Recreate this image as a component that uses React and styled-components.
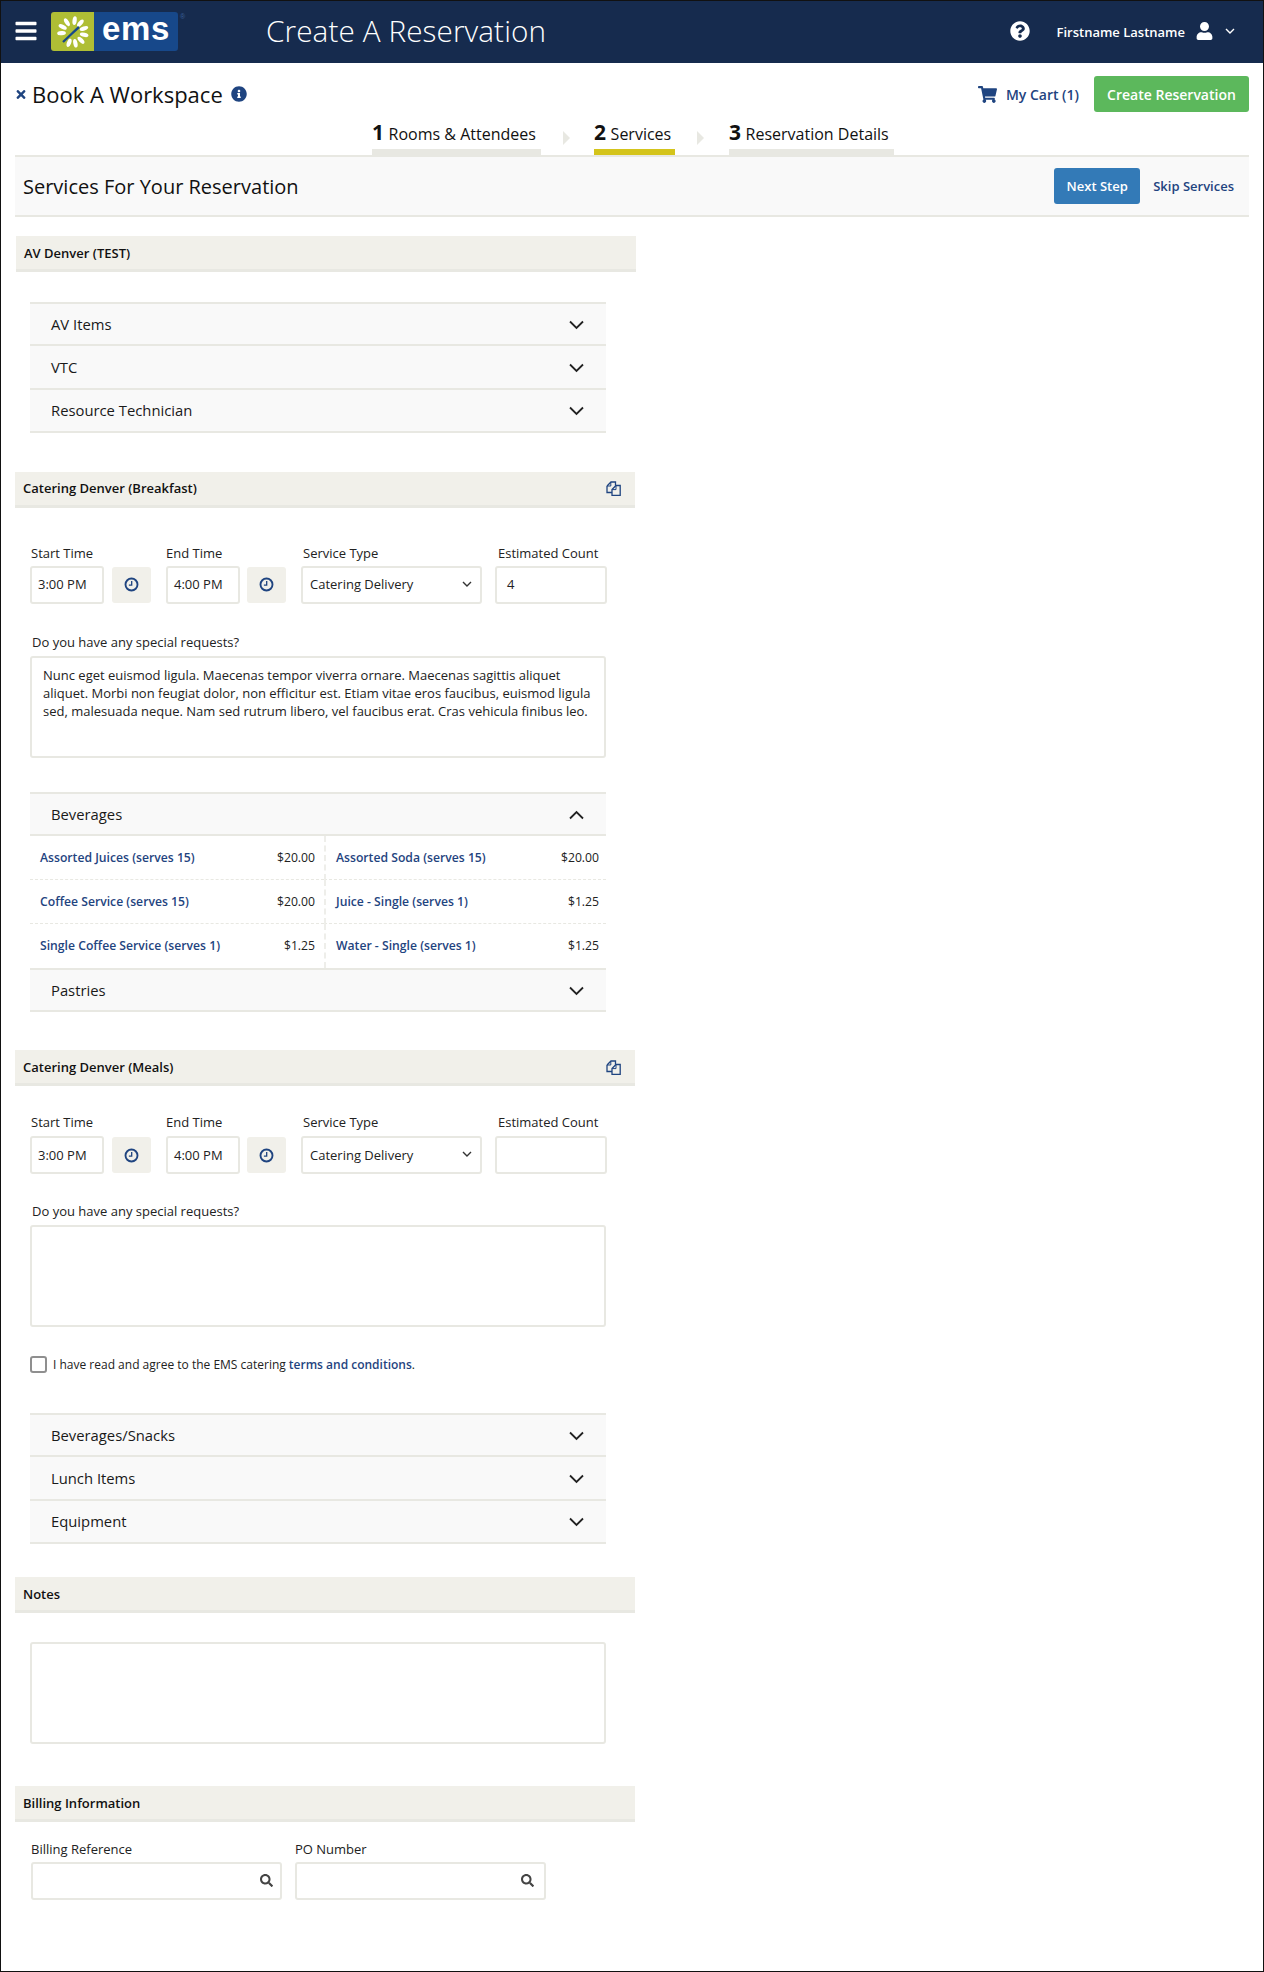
import styled, { createGlobalStyle } from "styled-components";
import {
  FaBars,
  FaTimes,
  FaInfoCircle,
  FaShoppingCart,
  FaQuestionCircle,
  FaUser,
  FaSearch,
} from "react-icons/fa";

const navy = "#1f4480";

const GlobalStyle = createGlobalStyle`
  html, body {
    margin: 0;
    padding: 0;
    background: #fff;
  }
  body {
    font-family: "Open Sans", "Liberation Sans", sans-serif;
    color: #1a1a1a;
  }
  * { box-sizing: border-box; }
`;

const Page = styled.div`
  width: 1264px;
  height: 1972px;
  border: 1px solid #111;
  overflow: hidden;
`;

const Header = styled.header`
  display: flex;
  align-items: center;
  height: 62px;
  background: #162b4e;
  color: #fff;
  padding: 0 28px 2px 14px;
`;

const Burger = styled(FaBars)`
  width: 22px;
  height: 24px;
  margin-right: 14px;
`;

const LogoWrap = styled.div`
  position: relative;
  margin-right: 88px;
  margin-top: 1px;
`;

const Registered = styled.span`
  position: absolute;
  top: 0;
  left: 129px;
  font: 7px/9px "Liberation Sans", sans-serif;
  color: #3a5f96;
`;

const Logo = styled.div`
  display: flex;
  width: 127px;
  height: 39px;
`;

const LogoMark = styled.div`
  display: flex;
  align-items: center;
  justify-content: center;
  width: 43px;
  border-radius: 3px 0 0 3px;
  background: #afbe35;
`;

const LogoWord = styled.div`
  flex: 1;
  border-radius: 0 3px 3px 0;
  background: #17488a;
  color: #fff;
  padding-bottom: 5px;
  font: bold 33px/34px "Liberation Sans", sans-serif;
  letter-spacing: 0.6px;
  text-align: center;
`;

const PageTitle = styled.div`
  flex: 1;
  margin-bottom: 1px;
  font-size: 29.7px;
  font-weight: 300;
  letter-spacing: 0.1px;
`;

const HelpIcon = styled(FaQuestionCircle)`
  width: 20px;
  height: 20px;
  margin-right: 27px;
`;

const UserName = styled.span`
  margin: 1px 11px 0 0;
  font-size: 13px;
  font-weight: 600;
`;

const UserIcon = styled(FaUser)`
  width: 17px;
  height: 18px;
  margin-right: 12px;
`;

const TinyChevron = styled.svg`
  width: 10px;
  height: 7px;
  fill: none;
  stroke: ${(p) => p.$color || "#fff"};
  stroke-width: 1.4;
`;

const Content = styled.main`
  padding: 0 14px 0 14px;
`;

const TitleRow = styled.div`
  display: flex;
  align-items: center;
  height: 56px;
  padding-top: 6px;
`;

const CloseIcon = styled(FaTimes)`
  width: 12px;
  height: 13px;
  color: ${navy};
  margin-right: 5px;
`;

const BookTitle = styled.h1`
  margin: 0 8px 0 0;
  font-size: 22px;
  font-weight: 400;
  line-height: 30px;
  color: #111;
`;

const InfoIcon = styled(FaInfoCircle)`
  width: 16px;
  height: 16px;
  color: ${navy};
`;

const Spacer = styled.div`
  flex: 1;
`;

const CartLink = styled.a`
  display: flex;
  align-items: center;
  color: ${navy};
  font-size: 14px;
  font-weight: 600;
  margin-right: 15px;
`;

const CartIcon = styled(FaShoppingCart)`
  width: 19px;
  height: 17px;
  margin-right: 9px;
`;

const GreenButton = styled.button`
  width: 155px;
  height: 36px;
  border: 0;
  border-radius: 3px;
  background: #5cb85c;
  color: #fff;
  font: 600 14px "Open Sans", sans-serif;
`;

const Steps = styled.nav`
  display: flex;
  height: 38px;
  padding-left: 357px;
  border-bottom: 2px solid #e8e8e2;
`;

const Step = styled.div`
  width: ${(p) => p.$w}px;
  height: 36px;
  border-bottom: 6px solid ${(p) => (p.$active ? "#d4c41b" : "#e8e8e2")};
  font-size: 16px;
  line-height: 26px;
  color: #111;
  white-space: nowrap;
  b {
    font-size: 21px;
    font-weight: 700;
    margin-right: 4.6px;
  }
`;

const StepArrow = styled.div`
  width: 0;
  height: 0;
  margin: 12px ${(p) => p.$right}px 0 ${(p) => p.$left}px;
  border-left: 7px solid #e8e8e2;
  border-top: 7px solid transparent;
  border-bottom: 7px solid transparent;
`;

const ServicesBar = styled.div`
  display: flex;
  align-items: center;
  height: 60px;
  padding: 0 15px 0 8px;
  background: #f9f9f9;
  border-bottom: 2px solid #e8e8e2;
`;

const ServicesTitle = styled.h2`
  flex: 1;
  margin: 0;
  font-size: 20px;
  font-weight: 400;
  color: #111;
`;

const BlueButton = styled.button`
  width: 86px;
  height: 36px;
  border: 0;
  border-radius: 3px;
  background: #337ab7;
  color: #fff;
  font: 600 13px "Open Sans", sans-serif;
  margin-right: 13px;
`;

const SkipLink = styled.a`
  color: ${navy};
  font-size: 13px;
  font-weight: 600;
`;

const Column = styled.div`
  width: 621px;
`;

const SectionHead = styled.div`
  display: flex;
  align-items: center;
  justify-content: space-between;
  width: 620px;
  height: 36px;
  margin-top: ${(p) => p.$top}px;
  margin-left: ${(p) => p.$left || 0}px;
  padding: 0 14px 0 8px;
  background: #f1f0ea;
  border-bottom: 3px solid #e8e8e2;
  font-size: 13px;
  font-weight: 600;
  color: #111;
`;

const CopyIcon = styled.svg`
  width: 15px;
  height: 16px;
  fill: none;
  stroke: ${navy};
  stroke-width: 1.3;
`;

const Indented = styled.div`
  margin: ${(p) => p.$top}px 30px 0 15px;
`;

const AccordionRow = styled.div`
  display: flex;
  align-items: center;
  justify-content: space-between;
  height: ${(p) => p.$h || 43.3}px;
  padding: 0 22px 0 21px;
  background: #f9f9f9;
  border-bottom: 2px solid #e8e8e2;
  border-top: ${(p) => (p.$topLine ? "2px solid #e8e8e2" : "0")};
  font-size: 14.8px;
  color: #1a1a1a;
  &:first-child {
    border-top: 2px solid #e8e8e2;
    height: 44.3px;
  }
`;

const Chevron = styled.svg`
  width: 15px;
  height: 10px;
  fill: none;
  stroke: #222;
  stroke-width: 1.8;
  margin-top: 2px;
`;

const FieldRow = styled.div`
  display: flex;
  align-items: flex-end;
  margin-top: ${(p) => p.$top}px;
  margin-left: ${(p) => p.$left || 15}px;
`;

const Field = styled.div`
  width: ${(p) => p.$w}px;
  margin-right: ${(p) => p.$gap || 0}px;
`;

const Label = styled.div`
  font-size: 13px;
  line-height: 17px;
  margin-bottom: ${(p) => p.$below || 5}px;
  padding-left: ${(p) => p.$pad || 0}px;
  color: #222;
  white-space: nowrap;
`;

const InputBox = styled.div`
  display: flex;
  align-items: center;
  justify-content: space-between;
  height: 38px;
  padding: 0 ${(p) => p.$right || 7}px 1px ${(p) => p.$left || 6}px;
  border: 2px solid #e8e8e2;
  border-radius: 3px;
  background: #fff;
  font-size: 13px;
  color: #222;
`;

const ClockButton = styled.div`
  display: flex;
  align-items: center;
  justify-content: center;
  width: 39px;
  height: 36px;
  margin: 0 15px 1px ${(p) => p.$left}px;
  border-radius: 3px;
  background: #f1f0ea;
`;

const ClockIcon = styled.svg`
  width: 15px;
  height: 15px;
  fill: none;
  stroke: ${navy};
`;

const Request = styled.div`
  height: 102px;
  padding: 8px 11px;
  border: 2px solid #e8e8e2;
  border-radius: 3px;
  background: #fff;
  font-size: 13px;
  line-height: 18px;
  color: #222;
`;

const ItemGrid = styled.div`
  display: grid;
  grid-template-columns: 294px 1fr;
`;

const Item = styled.div`
  display: flex;
  align-items: center;
  justify-content: space-between;
  height: 44px;
  padding: 0 ${(p) => (p.$right ? 7 : 9)}px 1px 10px;
  font-size: 12.2px;
  color: #222;
  border-bottom: ${(p) => (p.$last ? "0" : "1px dashed #e8e8e2")};
  border-left: ${(p) => (p.$right ? "2px dashed #eeeeea" : "0")};
  a {
    color: ${navy};
    font-weight: 600;
  }
`;

const AgreeRow = styled.label`
  display: flex;
  align-items: center;
  margin: 28px 0 0 15px;
  height: 18px;
  font-size: 12px;
  color: #222;
  a {
    color: ${navy};
    font-weight: 600;
    margin-left: 3px;
  }
`;

const CheckBox = styled.span`
  width: 17px;
  height: 17px;
  margin-right: 6px;
  border: 2px solid #8f8f8f;
  border-radius: 3px;
  background: #fff;
`;

const SearchIcon = styled(FaSearch)`
  width: 13px;
  height: 13px;
  color: #444;
`;

const clock = (
  <ClockIcon viewBox="0 0 16 16">
    <circle cx="8" cy="8" r="6.4" strokeWidth="2" />
    <path d="M8.2 4.2V8.6H5.2" strokeWidth="1.4" />
  </ClockIcon>
);

const copy = (
  <CopyIcon viewBox="0 0 15 16">
    <path d="M1 6L5 2h4.5V5.5" />
    <path d="M1 6v6.5h5" />
    <path d="M4.8 2.2V6H1.2" strokeWidth="1" />
    <path d="M10 5.5h4.2v9.8H6V9.5z" />
    <path d="M10 5.8V9.6H6.2" strokeWidth="1" />
  </CopyIcon>
);

const down = (
  <Chevron viewBox="0 0 15 10">
    <path d="M1 1.5l6.5 6.5L14 1.5" />
  </Chevron>
);

const up = (
  <Chevron viewBox="0 0 15 10">
    <path d="M1 8.5L7.5 2 14 8.5" />
  </Chevron>
);

// the gap at the lower left is where the needle of the mark comes out
const rays = [0, 32, 64, 96, 128, 160, 192, 256, 288, 320];

function TimeFields({ count, top, below }) {
  return (
    <FieldRow $top={top}>
      <Field $w={74}>
        <Label $below={below} $pad={1}>
          Start Time
        </Label>
        <InputBox>3:00 PM</InputBox>
      </Field>
      <ClockButton $left={8}>{clock}</ClockButton>
      <Field $w={74}>
        <Label $below={below}>End Time</Label>
        <InputBox>4:00 PM</InputBox>
      </Field>
      <ClockButton $left={7}>{clock}</ClockButton>
      <Field $w={181} $gap={13}>
        <Label $below={below} $pad={2}>
          Service Type
        </Label>
        <InputBox $left={7} $right={8}>
          Catering Delivery
          <TinyChevron viewBox="0 0 10 7" $color="#333">
            <path d="M1 1l4 4 4-4" />
          </TinyChevron>
        </InputBox>
      </Field>
      <Field $w={112}>
        <Label $below={below} $pad={3}>
          Estimated Count
        </Label>
        <InputBox $left={10}>{count}</InputBox>
      </Field>
    </FieldRow>
  );
}

function Accordion({ top, items }) {
  return (
    <Indented $top={top}>
      {items.map((name) => (
        <AccordionRow key={name}>
          {name}
          {down}
        </AccordionRow>
      ))}
    </Indented>
  );
}

const beverages = [
  ["Assorted Juices (serves 15)", "$20.00"],
  ["Assorted Soda (serves 15)", "$20.00"],
  ["Coffee Service (serves 15)", "$20.00"],
  ["Juice - Single (serves 1)", "$1.25"],
  ["Single Coffee Service (serves 1)", "$1.25"],
  ["Water - Single (serves 1)", "$1.25"],
];

export default function App() {
  return (
    <Page>
      <GlobalStyle />
      <Header>
        <Burger />
        <LogoWrap>
          <Logo>
            <LogoMark>
              <svg width="36" height="36" viewBox="0 0 36 36">
                {rays.map((r) => (
                  <ellipse
                    key={r}
                    cx="18"
                    cy="6.5"
                    rx="2.1"
                    ry="4.4"
                    fill="#fff"
                    transform={`rotate(${r + 8} 18 18)`}
                  />
                ))}
                <path d="M8 28L17 19.5 24 13" stroke="#17488a" strokeWidth="2.4" fill="none" />
              </svg>
            </LogoMark>
            <LogoWord>ems</LogoWord>
          </Logo>
          <Registered>®</Registered>
        </LogoWrap>
        <PageTitle>Create A Reservation</PageTitle>
        <HelpIcon />
        <UserName>Firstname Lastname</UserName>
        <UserIcon />
        <TinyChevron viewBox="0 0 10 7">
          <path d="M1 1l4 4 4-4" />
        </TinyChevron>
      </Header>
      <Content>
        <TitleRow>
          <CloseIcon />
          <BookTitle>Book A Workspace</BookTitle>
          <InfoIcon />
          <Spacer />
          <CartLink>
            <CartIcon />
            My Cart (1)
          </CartLink>
          <GreenButton>Create Reservation</GreenButton>
        </TitleRow>
        <Steps>
          <Step $w={169}>
            <b>1</b>Rooms &amp; Attendees
          </Step>
          <StepArrow $left={22} $right={24} />
          <Step $w={81} $active>
            <b>2</b>Services
          </Step>
          <StepArrow $left={22} $right={25} />
          <Step $w={165}>
            <b>3</b>Reservation Details
          </Step>
        </Steps>
        <ServicesBar>
          <ServicesTitle>Services For Your Reservation</ServicesTitle>
          <BlueButton>Next Step</BlueButton>
          <SkipLink>Skip Services</SkipLink>
        </ServicesBar>
        <Column>
          <SectionHead $top={19} $left={1}>
            AV Denver (TEST)
          </SectionHead>
          <Accordion top={30} items={["AV Items", "VTC", "Resource Technician"]} />

          <SectionHead $top={39}>
            Catering Denver (Breakfast)
            {copy}
          </SectionHead>
          <TimeFields count="4" top={37} below={4} />
          <Indented $top={30}>
            <Label $pad={2}>Do you have any special requests?</Label>
            <Request>
              Nunc eget euismod ligula. Maecenas tempor viverra ornare. Maecenas sagittis aliquet
              aliquet. Morbi non feugiat dolor, non efficitur est. Etiam vitae eros faucibus,
              euismod ligula sed, malesuada neque. Nam sed rutrum libero, vel faucibus erat. Cras
              vehicula finibus leo.
            </Request>
          </Indented>
          <Indented $top={34}>
            <AccordionRow>
              Beverages
              {up}
            </AccordionRow>
            <ItemGrid>
              {beverages.map(([name, price], i) => (
                <Item key={name} $right={i % 2 === 1} $last={i > 3}>
                  <a>{name}</a>
                  <span>{price}</span>
                </Item>
              ))}
            </ItemGrid>
            <AccordionRow $topLine $h={44}>
              Pastries
              {down}
            </AccordionRow>
          </Indented>

          <SectionHead $top={38}>
            Catering Denver (Meals)
            {copy}
          </SectionHead>
          <TimeFields top={28} below={5} />
          <Indented $top={29}>
            <Label $pad={2}>Do you have any special requests?</Label>
            <Request />
          </Indented>
          <AgreeRow>
            <CheckBox />I have read and agree to the EMS catering
            <a>terms and conditions</a>.
          </AgreeRow>
          <Accordion top={40} items={["Beverages/Snacks", "Lunch Items", "Equipment"]} />

          <SectionHead $top={33}>Notes</SectionHead>
          <Indented $top={29}>
            <Request />
          </Indented>

          <SectionHead $top={42}>Billing Information</SectionHead>
          <FieldRow $top={19} $left={16}>
            <Field $w={251} $gap={13}>
              <Label $below={4}>Billing Reference</Label>
              <InputBox>
                <span />
                <SearchIcon />
              </InputBox>
            </Field>
            <Field $w={251}>
              <Label $below={4}>PO Number</Label>
              <InputBox $right={10}>
                <span />
                <SearchIcon />
              </InputBox>
            </Field>
          </FieldRow>
        </Column>
      </Content>
    </Page>
  );
}
